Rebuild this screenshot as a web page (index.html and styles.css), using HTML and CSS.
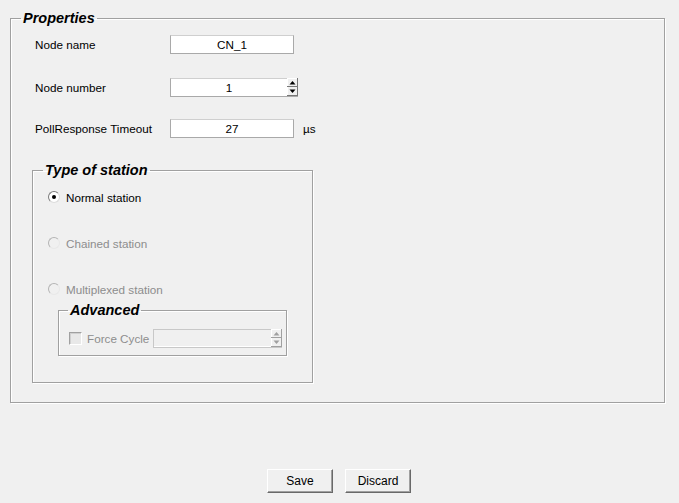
FILE: index.html
```html
<!DOCTYPE html>
<html>
<head>
<meta charset="utf-8">
<title>Properties</title>
<link rel="stylesheet" href="styles.css">
</head>
<body>
<div class="page">
  <fieldset class="group props">
    <legend>Properties</legend>
    <div class="props-body">
      <div class="row r1">
        <span class="lbl">Node name</span>
        <div class="entry w124">CN_1</div>
      </div>
      <div class="row r2">
        <span class="lbl">Node number</span>
        <div class="spin w128">
          <span class="val">1</span>
          <span class="arrows">
            <svg width="11" height="18" viewBox="0 0 11 18"><rect x="0.5" y="0.5" width="10" height="17" fill="#f0f0f0" stroke="#fff"/><line x1="0" y1="8.5" x2="11" y2="8.5" stroke="#777"/><line x1="0" y1="17.5" x2="11" y2="17.5" stroke="#777"/><line x1="10.5" y1="0" x2="10.5" y2="18" stroke="#777"/><polygon points="2.5,6.5 8.5,6.5 5.5,3" fill="#000"/><polygon points="2.5,11.5 8.5,11.5 5.5,15" fill="#000"/></svg>
          </span>
        </div>
      </div>
      <div class="row r3">
        <span class="lbl">PollResponse Timeout</span>
        <div class="entry w124">27</div>
        <span class="unit">µs</span>
      </div>

      <fieldset class="group station">
        <legend>Type of station</legend>
        <div class="station-body">
          <div class="radio-row first"><span class="radio on"></span><span class="rtext">Normal station</span></div>
          <div class="radio-row disabled"><span class="radio"></span><span class="rtext">Chained station</span></div>
          <div class="radio-row disabled"><span class="radio"></span><span class="rtext">Multiplexed station</span></div>
          <fieldset class="group adv">
            <legend>Advanced</legend>
            <div class="adv-body">
              <span class="check"></span>
              <span class="ctext">Force Cycle</span>
              <div class="spin dis w129">
                <span class="val"></span>
                <span class="arrows">
                  <svg width="11" height="18" viewBox="0 0 11 18"><rect x="0.5" y="0.5" width="10" height="17" fill="#f0f0f0" stroke="#fff"/><line x1="0" y1="8.5" x2="11" y2="8.5" stroke="#a0a0a0"/><line x1="0" y1="17.5" x2="11" y2="17.5" stroke="#a0a0a0"/><line x1="10.5" y1="0" x2="10.5" y2="18" stroke="#a0a0a0"/><polygon points="2.5,6.5 8.5,6.5 5.5,3" fill="#a0a0a0"/><polygon points="2.5,11.5 8.5,11.5 5.5,15" fill="#a0a0a0"/></svg>
                </span>
              </div>
            </div>
          </fieldset>
        </div>
      </fieldset>
    </div>
  </fieldset>

  <div class="buttons">
    <button class="btn">Save</button>
    <button class="btn">Discard</button>
  </div>
</div>
</body>
</html>
```

FILE: styles.css
```css
html, body {
  margin: 0;
  padding: 0;
  background: #f0f0f0;
}
body {
  font-family: "Liberation Sans", Arial, sans-serif;
  font-size: 11.7px;
  color: #000;
}
.page {
  padding-top: 10px;
  width: 679px;
  height: 503px;
  box-sizing: border-box;
}
.group {
  margin: 0;
  padding: 0;
  border: 1px solid #a0a0a0;
  box-shadow: 1px 1px 0 #fff, inset 1px 1px 0 #fff;
  min-width: 0;
}
.group > legend {
  font-family: "Liberation Sans", Arial, sans-serif;
  font-size: 14.5px;
  font-weight: bold;
  font-style: italic;
  line-height: 16px;
  padding: 0 2px;
  margin-left: 10px;
}
.props {
  margin: 0 14px 0 10px;
  width: 655px;
  box-sizing: border-box;
}
.props-body {
  padding: 0 0 19px 21px;
}
.row {
  display: flex;
  align-items: center;
  height: 19px;
  padding-left: 3px;
}
.r1 { margin-top: 9px; }
.r2 { margin-top: 24px; }
.r3 { margin-top: 22px; }
.lbl {
  width: 135px;
  flex: none;
}
.entry {
  box-sizing: border-box;
  height: 19px;
  background: #fff;
  border: 1px solid #a9a9a9;
  border-top-color: #cfcfcf;
  text-align: center;
  line-height: 17px;
}
.w124 { width: 124px; }
.w128 { width: 128px; }
.w129 { width: 129px; }
.unit { margin-left: 9px; }
.spin {
  box-sizing: border-box;
  height: 19px;
  display: flex;
  background: #fff;
  border: 1px solid #a9a9a9;
  border-top-color: #cfcfcf;
  border-right: none;
}
.spin .val {
  flex: 1;
  text-align: center;
  line-height: 17px;
}
.spin .arrows {
  width: 11px;
  height: 18px;
  display: block;
  margin-top: -1px;
}
.spin .arrows svg { display: block; }
.spin.dis {
  background: #f0f0f0;
  border-color: #c8c8c8;
  box-shadow: inset 0 -1px 0 #fff;
}

.station {
  margin-top: 24px;
  width: 281px;
  box-sizing: border-box;
}
.station-body {
  padding: 0 0 26px 15px;
}
.radio-row {
  display: flex;
  align-items: center;
  height: 16px;
  margin-top: 30px;
}
.radio-row.first { margin-top: 11px; }
.radio {
  box-sizing: border-box;
  width: 12px;
  height: 12px;
  border-radius: 50%;
  border: 1px solid;
  border-color: #7a7a7a #dcdcdc #dcdcdc #7a7a7a;
  background: #fff;
  position: relative;
  flex: none;
}
.radio.on::after {
  content: "";
  position: absolute;
  left: 3px;
  top: 3px;
  width: 4px;
  height: 4px;
  border-radius: 50%;
  background: #000;
}
.rtext { margin-left: 6px; }
.radio-row.disabled .rtext { color: #8d8d8d; }
.radio-row.disabled .radio {
  background: #f0f0f0;
  border-color: #b4b4b4 #e8e8e8 #e8e8e8 #b4b4b4;
}

.adv {
  margin: 5px 0 0 10px;
  width: 229px;
  box-sizing: border-box;
}
.adv > legend { margin-left: 9px; }
.adv-body {
  display: flex;
  align-items: center;
  padding: 11px 0 7px 10px;
  height: 19px;
}
.check {
  box-sizing: border-box;
  width: 13px;
  height: 13px;
  border: 1px solid;
  border-color: #a0a0a0 #fff #fff #a0a0a0;
  background: #e8e8e8;
  box-shadow: inset 1px 1px 0 #d0d0d0;
  flex: none;
}
.ctext {
  margin-left: 5px;
  width: 66px;
  color: #8d8d8d;
}

.buttons {
  display: flex;
  justify-content: center;
  gap: 12px;
  margin-top: 66px;
  padding-right: 1px;
}
.btn {
  box-sizing: border-box;
  width: 66px;
  height: 24px;
  margin: 0;
  padding: 0;
  font-family: "Liberation Sans", Arial, sans-serif;
  font-size: 12px;
  color: #000;
  background: #f0f0f0;
  border: 1px solid;
  border-color: #fff #696969 #696969 #fff;
  box-shadow: inset -1px -1px 0 #a0a0a0;
}
```
